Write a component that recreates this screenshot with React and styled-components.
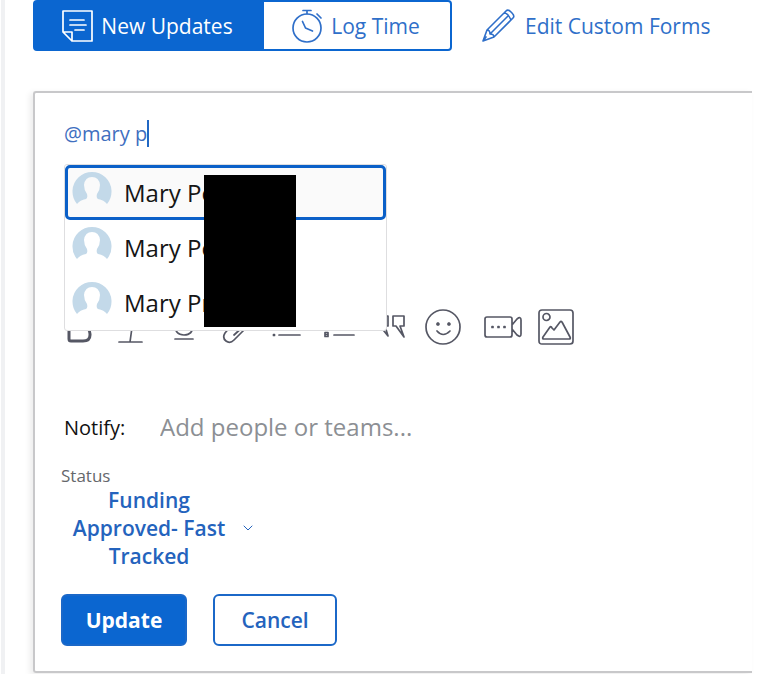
import { useState } from 'react'
import styled, { createGlobalStyle } from 'styled-components'

const GlobalStyle = createGlobalStyle`
    * {
        box-sizing: border-box;
    }

    body {
        margin: 0;
        background: white;
        color: #111;
        font-family: "Open Sans", "Noto Sans", sans-serif;
    }

    button, input {
        font-family: inherit;
    }
`

const Page = styled.main`
    margin-left: 1px;
    padding: 0 15px 1px 28px;
    border-left: 4px solid #f0f1f3;
`

const TopBar = styled.nav`
    display: flex;
    align-items: center;
    height: 51px;
`

const TabButton = styled.button`
    display: flex;
    align-items: center;
    justify-content: center;
    gap: 8px;
    width: ${({ $width }) => $width};
    height: 51px;
    padding: 0 2px 0 0;
    border: 2px solid #0b66d0;
    border-left-width: ${({ $active }) => ($active ? '2px' : '0')};
    border-radius: ${({ $active }) => ($active ? '4px 0 0 4px' : '0 4px 4px 0')};
    background: ${({ $active }) => ($active ? '#0b66d0' : 'white')};
    color: ${({ $active }) => ($active ? 'white' : '#2f6fc9')};
    font-size: 21px;
    font-weight: ${({ $active }) => ($active ? 500 : 400)};
    white-space: nowrap;
`

const FormsLink = styled.a`
    display: flex;
    align-items: center;
    gap: 10px;
    margin-left: 30px;
    color: #2f6fc9;
    font-size: 21px;
    text-decoration: none;
    white-space: nowrap;
`

const Panel = styled.form`
    margin-top: 40px;
    padding: 27px 0 25px 26px;
    border: 2px solid #c8c8ca;
    border-right: none;
    border-radius: 3px 0 0 3px;
    box-shadow: -3px 2px 6px rgba(0, 0, 0, 0.08);
`

const Editor = styled.div`
    position: relative;
    display: flex;
    height: 28px;
    padding-left: 3px;
    margin-bottom: 161px;
`

const MentionInput = styled.input`
    field-sizing: content;
    padding: 0;
    border: none;
    outline: none;
    background: transparent;
    color: #3f6fbf;
    font-size: 20px;
    line-height: 28px;
`

const Caret = styled.span`
    width: 2px;
    height: 27px;
    background: #2168c4;
`

const Suggestions = styled.div`
    position: absolute;
    top: 44px;
    left: 3px;
    z-index: 1;
    width: 323px;
    border: 1px solid #dedee0;
    border-radius: 3px;
    background: white;
`

const Suggestion = styled.button`
    display: flex;
    align-items: center;
    gap: 12px;
    width: 100%;
    height: 55px;
    padding: 0 4px;
    border: 3px solid ${({ $selected }) => ($selected ? '#0b60c8' : 'transparent')};
    border-radius: 5px;
    background: ${({ $selected }) => ($selected ? '#fafafa' : 'white')};
    color: #151515;
    font-size: 24px;
    text-align: left;
`

const AvatarPicture = styled.svg`
    flex: none;
    height: 40px;
    width: 40px;
    margin-bottom: 4px;
`

const Redaction = styled.div`
    position: absolute;
    top: 10px;
    left: 139px;
    width: 92px;
    height: 152px;
    background: black;
`

const Toolbar = styled.div`
    display: grid;
    grid-template-columns: repeat(8, 52px) 68px 38px;
    margin-left: -8px;
    margin-bottom: 64px;
`

const ToolButton = styled.button`
    display: flex;
    justify-content: center;
    height: 36px;
    padding: 0;
    border: none;
    background: none;
    color: #555764;
`

const NotifyRow = styled.div`
    display: flex;
    align-items: center;
    height: 36px;
    padding-left: 3px;
    margin-bottom: 21px;
`

const NotifyLabel = styled.label`
    width: 96px;
    font-size: 20px;
`

const NotifyInput = styled.input`
    flex: 1;
    min-width: 0;
    padding: 0 0 2px;
    border: none;
    outline: none;
    font-size: 24px;

    &::placeholder {
        color: #8c8f94;
    }
`

const StatusLabel = styled.label`
    display: block;
    color: #65676b;
    font-size: 17px;
    line-height: 20px;
`

const StatusButton = styled.button`
    display: flex;
    align-items: center;
    gap: 6px;
    padding: 0;
    border: none;
    background: none;
    color: #2463bd;
    font-size: 21px;
    font-weight: 600;
    line-height: 28px;
`

const StatusValue = styled.span`
    width: 176px;
    padding: 0 8px;
`

const Actions = styled.div`
    display: flex;
    gap: 26px;
    margin-top: 24px;
`

const ActionButton = styled.button`
    width: ${({ $width }) => $width};
    height: 52px;
    padding: 0;
    border: 2px solid #1b68c8;
    border-radius: 6px;
    background: ${({ $primary }) => ($primary ? '#0b66d0' : 'white')};
    color: ${({ $primary }) => ($primary ? 'white' : '#2463bd')};
    font-size: 21px;
    font-weight: ${({ $primary }) => ($primary ? 700 : 600)};
`

const Icon = styled.svg.attrs({ 'aria-hidden': true })`
    flex: none;
    fill: none;
    stroke: currentColor;
    stroke-width: ${({ $stroke }) => $stroke || 1.7};
    stroke-linejoin: round;
    stroke-linecap: round;
`

function NoteIcon() {
    return (
        <Icon width="31" height="32" viewBox="0 0 31 32">
            <path d="M1 1h29v30H10L1 22zM1 22h9v9M8 10h14M8 15h16M13 20h9" />
        </Icon>
    )
}

function StopwatchIcon() {
    return (
        <Icon width="31" height="34" viewBox="0 0 31 34">
            <circle cx="15" cy="19" r="14" />
            <path d="M11 1.500h8M15 1.500v3M25 5l4 4M10.500 12.500l3 6.500 7 3" />
        </Icon>
    )
}

function PencilIcon() {
    return (
        <Icon width="33" height="33" viewBox="0 0 33 33" $stroke={1.6}>
            <path d="M1 32l4-11L24 2q2-2 5 1l1 1q3 3 1 5L12 28zM5 21q3 0 3 4 4 0 4 3M8 25L26 7M22 4q4 0 7 7M1 32l3-4" />
        </Icon>
    )
}

function Avatar() {
    return (
        <AvatarPicture viewBox="0 0 40 40" aria-hidden="true">
            <path
                fill="#c3d9e9"
                d="M5 33A19.500 19.500 0 1 1 35 33Q32 29 26 28Q24 27 25 23Q28 19 28 14Q27 6 20 6T12 14Q12 19 15 23Q16 27 14 28Q8 29 5 33Z"
            />
        </AvatarPicture>
    )
}

const tools = [
    { name: 'Bold', stroke: 3, d: 'M8 4h12q8 0 8 7t-8 7H8zM8 18h13q8 0 8 7v1q0 6-7 6H10q-2 0-2-2z' },
    { name: 'Italic', d: 'M12 4h16M21 4l-4 29M6 33h23' },
    { name: 'Underline', d: 'M10 4v12q0 10 9 10t9-10V4M10 30h18' },
    { name: 'Link', d: 'M30 18L17 31q-4 4-8 1t-1-8L21 9q4-4 8-1t0 7L17 26' },
    { name: 'Bulleted list', d: 'M10 6h21M10 16h21M10 26h21M4 6h1M4 16h1M4.500 25.500v1h1v-1z' },
    { name: 'Numbered list', d: 'M13 6h20M13 16h20M13 26h20M5 4v4M4 14h3v4H4zM4 23.500h3v4H4zM4 25.500h3' },
    { name: 'Quote', d: 'M5 7h10v10h-3l3 10-8-10H5zM20 7h11v10h-4l4 11-8-11h-3z' },
    { name: 'Emoji', d: 'M35 18a17 17 0 1 1-34 0a17 17 0 1 1 34 0M12 22q6 7 13 0M13 14a1 1 0 1 1-.1 0M24 14a1 1 0 1 1-.1 0' },
    { name: 'Video', width: 38, d: 'M3 8h23q2 0 2 2v16q0 2-2 2H3q-2 0-2-2V10q0-2 2-2zM28 16l5-6q4-3 4 1v14q0 4-4 1l-5-6M8 17.500h1v1h-1zM14 17.500h1v1h-1zM20 17.500h1v1h-1z' },
    { name: 'Image', d: 'M4 1h28q3 0 3 3v28q0 3-3 3H4q-3 0-3-3V4q0-3 3-3zM12 8a3.500 3.500 0 1 1-7 0a3.500 3.500 0 1 1 7 0M6 30q-2 0-1-2l7-10q1-1 2 1l2 2 6-8q1-1 2 0l8 15q1 2-1 2z' },
]

const people = ['Mary Pe', 'Mary Pe', 'Mary Pr']

function MentionBox() {
    const [text, setText] = useState('@mary p')

    return (
        <Editor>
            <MentionInput aria-label="Update" value={text} onChange={(e) => setText(e.target.value)} />
            <Caret />
            <Suggestions>
                {people.map((person, i) => (
                    <Suggestion key={i} type="button" $selected={i === 0}>
                        <Avatar />
                        {person}
                    </Suggestion>
                ))}
                <Redaction />
            </Suggestions>
        </Editor>
    )
}

function App() {
    return (
        <Page>
            <GlobalStyle />
            <TopBar>
                <TabButton $active $width="231px"><NoteIcon />New Updates</TabButton>
                <TabButton $width="188px"><StopwatchIcon />Log Time</TabButton>
                <FormsLink href="#forms"><PencilIcon />Edit Custom Forms</FormsLink>
            </TopBar>
            <Panel onSubmit={(e) => e.preventDefault()}>
                <MentionBox />
                <Toolbar>
                    {tools.map((tool) => (
                        <ToolButton key={tool.name} type="button" aria-label={tool.name}>
                            <Icon
                                width={tool.width || 36}
                                height="36"
                                viewBox={`0 0 ${tool.width || 36} 36`}
                                $stroke={tool.stroke}
                            >
                                <path d={tool.d} />
                            </Icon>
                        </ToolButton>
                    ))}
                </Toolbar>
                <NotifyRow>
                    <NotifyLabel htmlFor="notify">Notify:</NotifyLabel>
                    <NotifyInput id="notify" placeholder="Add people or teams..." />
                </NotifyRow>
                <StatusLabel htmlFor="status">Status</StatusLabel>
                <StatusButton id="status" type="button" aria-haspopup="listbox">
                    <StatusValue>Funding Approved- Fast Tracked</StatusValue>
                    <Icon width="10" height="6" viewBox="0 0 10 6" $stroke={1}>
                        <path d="M1 1l4 4 4-4" />
                    </Icon>
                </StatusButton>
                <Actions>
                    <ActionButton type="submit" $primary $width="126px">Update</ActionButton>
                    <ActionButton type="button" $width="124px">Cancel</ActionButton>
                </Actions>
            </Panel>
        </Page>
    )
}

export default App
